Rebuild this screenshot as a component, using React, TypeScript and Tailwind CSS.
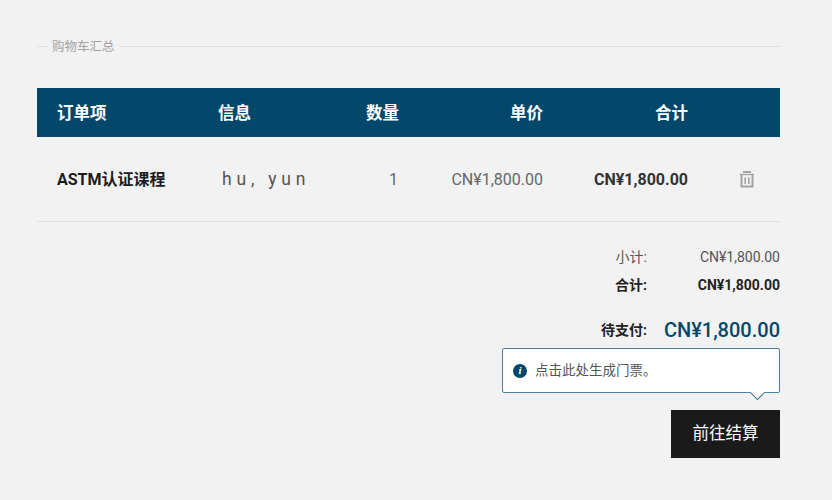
import React from "react";

const FONT = "font-['Roboto','Noto_Sans_CJK_SC',sans-serif]";
const COLS = "grid grid-cols-[161px_100px_81px_144px_145px_1fr] items-center pl-5";

function Trash() {
  return (
    <svg width="16" height="17" viewBox="0 0 16 17" className="text-[#a3a3a3]">
      <path d="M4 1h8" stroke="currentColor" strokeWidth="2" fill="none" />
      <path d="M1 3.5h14" stroke="currentColor" strokeWidth="1.4" fill="none" />
      <path d="M2.5 4v11.5h11V4" stroke="currentColor" strokeWidth="2" fill="none" />
      <path d="M6.2 6.5v6.5M9.8 6.5v6.5" stroke="currentColor" strokeWidth="1.6" fill="none" />
    </svg>
  );
}

function Info() {
  return (
    <span className="flex h-[14px] w-[14px] items-center justify-center rounded-full bg-[#03476a] font-['Liberation_Serif',serif] text-[11px] font-bold italic leading-none text-white">
      i
    </span>
  );
}

export default function App() {
  return (
    <div className={`${FONT} min-h-[500px] w-[832px] bg-[#f2f2f2] pl-[37px] pr-[52px] pt-[37px]`}>
      <div className="flex h-[18px] items-center">
        <span className="h-px w-[11px] bg-[#dfdfdf]" />
        <span className="pl-1 pr-[4px] pt-[2px] text-[12.5px] leading-[18px] text-[#a3a3a3]">购物车汇总</span>
        <span className="h-px flex-1 bg-[#dfdfdf]" />
      </div>

      <div className={`${COLS} mt-[33px] h-[49px] bg-[#03476a] pt-[3px] text-[16.5px] font-bold text-white`}>
        <span>订单项</span>
        <span>信息</span>
        <span className="text-right">数量</span>
        <span className="text-right">单价</span>
        <span className="text-right">合计</span>
      </div>

      <div className={`${COLS} h-[85px] border-b border-[#e2e2e2] pt-px text-[16px]`}>
        <span className="font-bold text-[#1c1c1c]">ASTM认证课程</span>
        <span className="whitespace-nowrap pl-1 text-[17.5px] tracking-[4.8px] text-[#555]">hu, yun</span>
        <span className="pr-px text-right text-[#666]">1</span>
        <span className="text-right text-[#666]">CN¥1,800.00</span>
        <span className="text-right font-bold text-[#333]">CN¥1,800.00</span>
        <span className="flex justify-end pr-[25px]">
          <Trash />
        </span>
      </div>

      <div className="flex flex-col items-end">
        <div className="mt-[24px] flex h-[22px] items-center text-[14px] text-[#555]">
          <span>小计:</span>
          <span className="w-[133px] text-right">CN¥1,800.00</span>
        </div>
        <div className="mt-[6px] flex h-[22px] items-center text-[14px] font-bold text-[#222]">
          <span>合计:</span>
          <span className="w-[133px] text-right">CN¥1,800.00</span>
        </div>
        <div className="mt-[21px] flex h-[26px] items-center">
          <span className="text-[14px] font-bold text-[#222]">待支付:</span>
          <span className="w-[133px] text-right text-[20px] font-medium text-[#03476a]">CN¥1,800.00</span>
        </div>

        <div className="relative mt-[5px] flex h-[45px] w-[278px] items-center gap-2 rounded-[2px] border border-[#4f7f9b] bg-white pl-[10px] text-[13.5px] text-[#555]">
          <Info />
          <span>点击此处生成门票。</span>
          <span className="absolute bottom-[-6px] right-[16px] h-[11px] w-[11px] rotate-45 border-b border-r border-[#3f7391] bg-white" />
        </div>

        <button className="mt-[17px] flex h-[48px] w-[109px] items-center justify-center bg-[#1a1a1a] text-[16.5px] text-white">
          前往结算
        </button>
      </div>
    </div>
  );
}
